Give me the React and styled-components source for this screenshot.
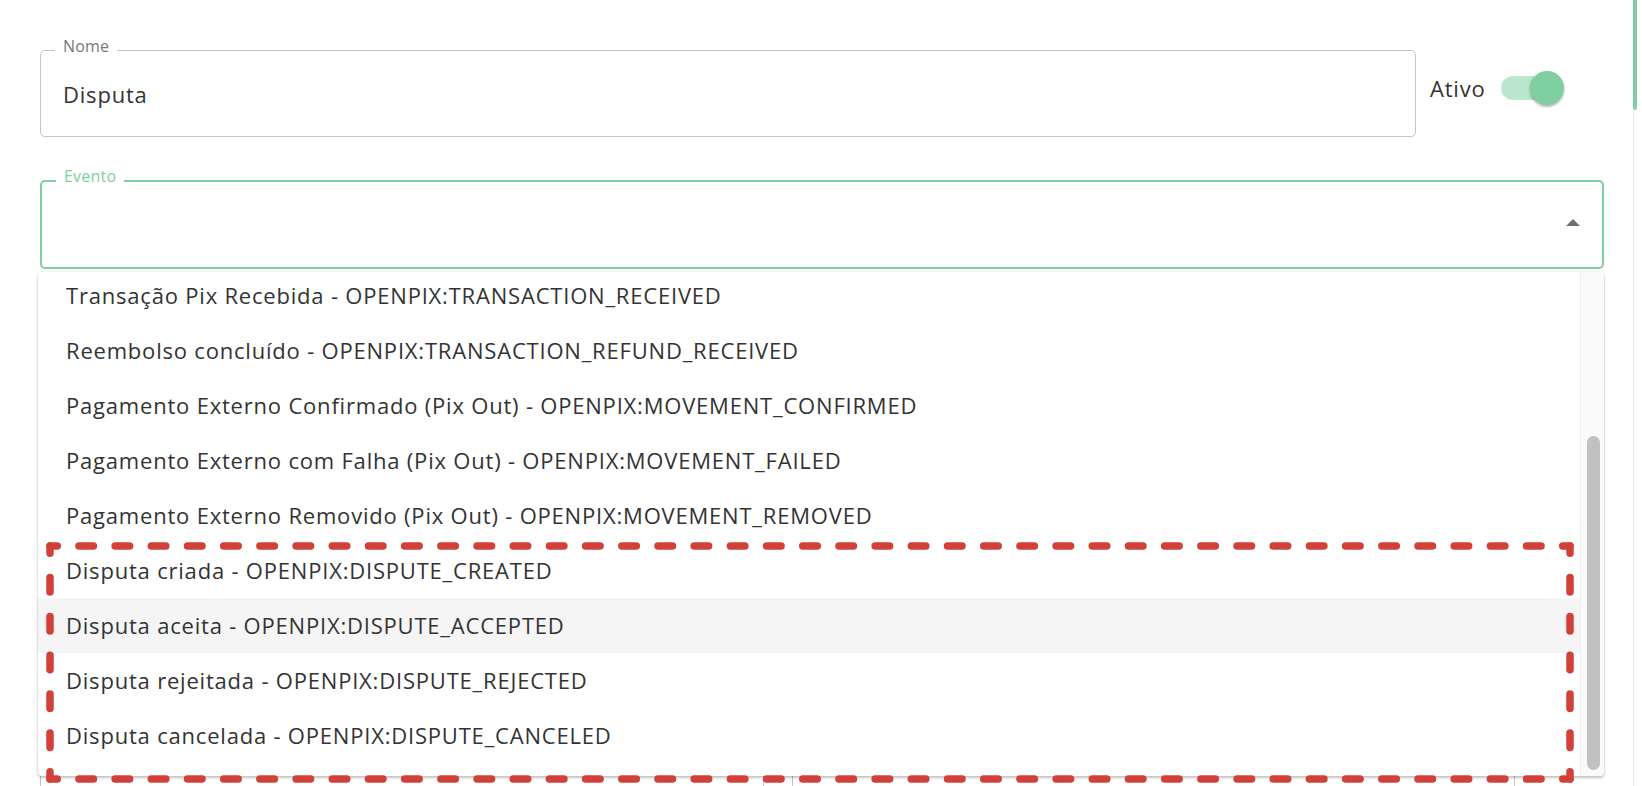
import React from "react"
import styled, { createGlobalStyle } from "styled-components"

const GlobalStyle = createGlobalStyle`
    html, body {
        margin: 0;
        height: 786px;
        overflow: hidden;
        background: #fff;
        font-family: "Open Sans", "Noto Sans", sans-serif;
        color: #333;
    }
`

const Page = styled.div`
    display: flex;
    height: 786px;
`

const Main = styled.div`
    flex: 1;
    display: flex;
    flex-direction: column;
    padding: 38px 29px 0 40px;
`

const PageRail = styled.div`
    width: 9px;
    display: flex;
    flex-direction: column;
    div:first-child {
        width: 4px;
        height: 110px;
        background: #80cfa3;
        border-radius: 0 0 2px 2px;
    }
    div:last-child {
        flex: 1;
        width: 1px;
        background: #e6e6e6;
    }
`

const NameRow = styled.div`
    display: flex;
    align-items: flex-start;
`

const Field = styled.fieldset`
    flex: 1;
    margin: 0;
    min-width: 0;
    box-sizing: border-box;
    height: ${p => p.$height}px;
    padding: 0 22px;
    border: ${p => p.$focused ? "2px solid #80cfa3" : "1px solid #c4c4c4"};
    border-radius: 5px;
    legend {
        margin-left: -8px;
        padding: 0 8px 9px;
        font-size: 16px;
        line-height: 16px;
        letter-spacing: 0.2px;
        color: ${p => p.$focused ? "#80cfa3" : "#777"};
    }
`

const Value = styled.div`
    margin-top: 17px;
    font-size: 22px;
    letter-spacing: 0.8px;
    line-height: 28px;
    color: #333;
`

const SwitchGroup = styled.label`
    width: 188px;
    height: 34px;
    flex-shrink: 0;
    box-sizing: border-box;
    padding-left: 14px;
    margin-top: 32.5px;
    display: flex;
    align-items: center;
    gap: 15px;
    font-size: 22px;
    letter-spacing: 0.8px;
    color: #333;
`

const Track = styled.span`
    width: 58px;
    height: 24px;
    border-radius: 12px;
    background: #b9e6cd;
    display: flex;
    align-items: center;
    justify-content: flex-end;
`

const Thumb = styled.span`
    width: 34px;
    height: 34px;
    margin-right: -5px;
    border-radius: 50%;
    background: #80cfa3;
    box-shadow: 0 2px 2px rgba(0, 0, 0, 0.22), 0 1px 4px rgba(0, 0, 0, 0.1);
`

const EventoWrap = styled.div`
    position: relative;
    margin-top: 31px;
    display: flex;
`

const ArrowRow = styled.div`
    margin-top: 26px;
    height: 7px;
    display: flex;
    justify-content: flex-end;
    svg { display: block; }
`

const MenuLayer = styled.div`
    position: absolute;
    top: 104px;
    left: -2px;
    width: 1566px;
    z-index: 2;
`

const Paper = styled.div`
    height: 504px;
    display: flex;
    background: #fff;
    border-radius: 4px;
    overflow: hidden;
    box-shadow: 0 2px 3px rgba(0, 0, 0, 0.22), 0 0 3px rgba(0, 0, 0, 0.1);
`

const List = styled.ul`
    flex: 1;
    list-style: none;
    margin: -4.5px 0 0;
    padding: 0;
`

const Item = styled.li`
    height: 55px;
    display: flex;
    align-items: center;
    padding-left: 28px;
    font-size: 22px;
    letter-spacing: 0.8px;
    color: #333;
    white-space: nowrap;
    background: ${p => p.$hover ? "#f5f5f5" : "transparent"};
`

const ScrollTrack = styled.div`
    width: 24px;
    box-sizing: border-box;
    border-left: 1px solid #ededed;
    background: #fafafa;
    padding: 164px 4px 0 6px;
    div {
        width: 13px;
        height: 334px;
        border-radius: 7px;
        background: #c1c1c1;
    }
`

const Mark = styled.svg`
    position: absolute;
    left: 8px;
    top: 270px;
    overflow: visible;
    pointer-events: none;
`

const UnderRow = styled.div`
    margin-top: 32px;
    display: flex;
    gap: 28px;
    padding-right: 89px;
`

const UnderBox = styled.div`
    flex: 1;
    height: 600px;
    border: 1px solid #c4c4c4;
    border-radius: 5px;
`

const events = [
    "Transação Pix Recebida - OPENPIX:TRANSACTION_RECEIVED",
    "Reembolso concluído - OPENPIX:TRANSACTION_REFUND_RECEIVED",
    "Pagamento Externo Confirmado (Pix Out) - OPENPIX:MOVEMENT_CONFIRMED",
    "Pagamento Externo com Falha (Pix Out) - OPENPIX:MOVEMENT_FAILED",
    "Pagamento Externo Removido (Pix Out) - OPENPIX:MOVEMENT_REMOVED",
    "Disputa criada - OPENPIX:DISPUTE_CREATED",
    "Disputa aceita - OPENPIX:DISPUTE_ACCEPTED",
    "Disputa rejeitada - OPENPIX:DISPUTE_REJECTED",
    "Disputa cancelada - OPENPIX:DISPUTE_CANCELED",
]

// one path per side so every corner carries a dash
const DashedBox = ({ w, h }) => {
    const inset = 4
    const x2 = w - inset
    const y2 = h - inset
    const sides = [
        [inset, inset, x2, inset],
        [x2, inset, x2, y2],
        [x2, y2, inset, y2],
        [inset, y2, inset, inset],
    ]
    return (
        <Mark width={w} height={h}>
            {sides.map(([ax, ay, bx, by], i) => {
                const len = Math.hypot(bx - ax, by - ay)
                const pitch = len / Math.max(1, Math.round(len / 36))
                const dash = 14.5
                return (
                    <path
                        key={i}
                        d={`M${ax} ${ay}L${bx} ${by}`}
                        stroke="#d1413a"
                        strokeWidth="7.5"
                        strokeLinecap="round"
                        fill="none"
                        strokeDasharray={`${dash} ${pitch - dash}`}
                        strokeDashoffset={dash / 2}
                    />
                )
            })}
        </Mark>
    )
}

const App = () => {
    return (
        <>
            <GlobalStyle />
            <Page>
                <Main>
                    <NameRow>
                        <Field $height={99}>
                            <legend>Nome</legend>
                            <Value>Disputa</Value>
                        </Field>
                        <SwitchGroup>
                            Ativo
                            <Track><Thumb /></Track>
                        </SwitchGroup>
                    </NameRow>
                    <EventoWrap>
                        <Field $height={100.5} $focused>
                            <legend>Evento</legend>
                            <ArrowRow>
                                <svg width="14" height="7" viewBox="0 0 14 7">
                                    <path d="M0 7L7 0L14 7Z" fill="#707070" />
                                </svg>
                            </ArrowRow>
                        </Field>
                        <MenuLayer>
                            <Paper>
                                <List>
                                    {events.map((e, i) => (
                                        <Item key={e} $hover={i === 6}>{e}</Item>
                                    ))}
                                </List>
                                <ScrollTrack><div /></ScrollTrack>
                            </Paper>
                            <DashedBox w={1528} h={241} />
                        </MenuLayer>
                    </EventoWrap>
                    <UnderRow>
                        <UnderBox />
                        <UnderBox />
                    </UnderRow>
                </Main>
                <PageRail>
                    <div />
                    <div />
                </PageRail>
            </Page>
        </>
    )
}

export default App
